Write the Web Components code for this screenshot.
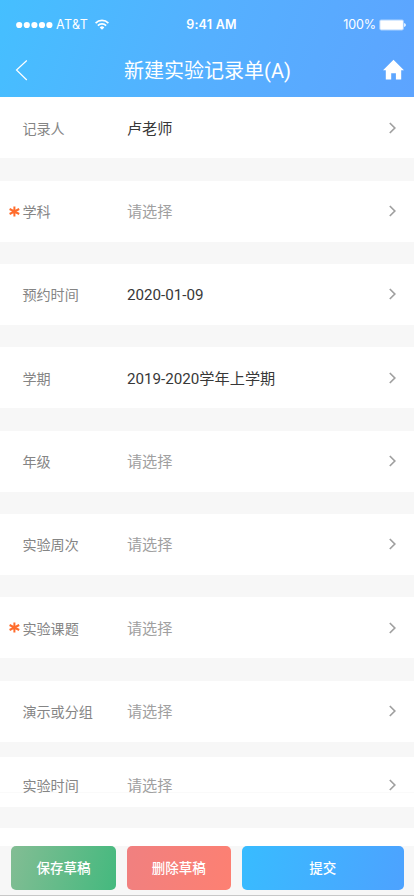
<!DOCTYPE html>
<html lang="zh-CN">
<head>
<meta charset="UTF-8">
<meta name="viewport" content="width=device-width, initial-scale=1.0">
<title>新建实验记录单(A)</title>
<style>
    body {
        margin: 0;
        background: #f7f7f7;
        font-family: Roboto, "Noto Sans CJK SC", sans-serif;
        overflow: hidden;
    }
</style>
</head>
<body>
<record-page>
    <status-bar slot="header" carrier="AT&amp;T" time="9:41 AM" battery="100%"></status-bar>
    <nav-bar slot="header">新建实验记录单(A)</nav-bar>

    <form-row label="记录人" filled>卢老师</form-row>
    <form-row label="学科" required>请选择</form-row>
    <form-row label="预约时间" filled>2020-01-09</form-row>
    <form-row label="学期" filled>2019-2020学年上学期</form-row>
    <form-row label="年级">请选择</form-row>
    <form-row label="实验周次">请选择</form-row>
    <form-row label="实验课题" required>请选择</form-row>
    <form-row label="演示或分组" tight>请选择</form-row>
    <form-row label="实验时间" short>请选择</form-row>

    <action-button slot="footer" kind="save">保存草稿</action-button>
    <action-button slot="footer" kind="delete">删除草稿</action-button>
    <action-button slot="footer" kind="submit">提交</action-button>
</record-page>

<script>
class RecordPage extends HTMLElement {
    connectedCallback() {
        this.attachShadow({ mode: 'open' });
        this.shadowRoot.innerHTML = `
            <style>
                :host {
                    display: flex;
                    flex-direction: column;
                    height: 896px;
                    box-sizing: border-box;
                    border-bottom: 1px solid #c8c8c8;
                }

                header {
                    flex: none;
                    height: 97.2px;
                    background: linear-gradient(110deg, #45bfff 0%, #55b0ff 50%, #5da4ff 100%);
                    color: white;
                }

                main {
                    flex: 1;
                    min-height: 0;
                    overflow: hidden;
                }

                .next-row {
                    height: 61px;
                    background: white;
                }

                footer {
                    flex: none;
                    display: grid;
                    grid-template-columns: 104.5px 104px 162px;
                    gap: 11px;
                    height: 49.5px;
                    box-sizing: border-box;
                    padding: 0 11.3px 5px;
                    background: #f7f7f7;
                }
            </style>
            <header><slot name="header"></slot></header>
            <main>
                <slot></slot>
                <div class="next-row"></div>
            </main>
            <footer><slot name="footer"></slot></footer>
        `;
    }
}

class StatusBar extends HTMLElement {
    connectedCallback() {
        this.attachShadow({ mode: 'open' });
        this.shadowRoot.innerHTML = `
            <style>
                :host {
                    display: grid;
                    grid-template-columns: 1fr auto 1fr;
                    align-items: center;
                    height: 49px;
                    padding: 0 8px 0 16px;
                    font-family: Inter, sans-serif;
                    font-size: 12.5px;
                }

                .left, .right {
                    display: flex;
                    align-items: center;
                }

                .right {
                    justify-content: flex-end;
                    gap: 3px;
                }

                .carrier {
                    margin: 0 7px 0 3px;
                    letter-spacing: 0.4px;
                }

                .time {
                    margin-left: 1px;
                    font-weight: 600;
                    letter-spacing: 0.25px;
                }

                .battery {
                    letter-spacing: -0.1px;
                }

                svg {
                    display: block;
                }
            </style>
            <div class="left">
                <svg width="37" height="8" fill="white">
                    <circle cx="3.2" cy="4" r="3.1"/>
                    <circle cx="10.8" cy="4" r="3.1"/>
                    <circle cx="18.4" cy="4" r="3.1"/>
                    <circle cx="26" cy="4" r="3.1"/>
                    <circle cx="33.4" cy="4" r="3.1"/>
                </svg>
                <span class="carrier"></span>
                <svg width="14" height="11" viewBox="0 0 14 11" fill="none" stroke="white" stroke-width="1.8">
                    <path d="M.6 4.1a9 9 0 0 1 12.8 0M2.9 6.6a5.8 5.8 0 0 1 8.2 0"/>
                    <path d="M4.7 8.4a3.3 3.3 0 0 1 4.6 0L7 10.7z" fill="white" stroke="none"/>
                </svg>
            </div>
            <span class="time"></span>
            <div class="right">
                <span class="battery"></span>
                <svg width="27" height="12" viewBox="0 0 27 12">
                    <rect x=".3" y=".6" width="24.6" height="10.8" rx="1.8" fill="white" fill-opacity=".5"/>
                    <rect x="1.3" y="1.6" width="22.6" height="8.8" rx=".8" fill="white"/>
                    <path d="M25.2 4.1q1.6.5 1.6 1.9t-1.6 1.9z" fill="white"/>
                </svg>
            </div>
        `;
        this.shadowRoot.querySelector('.carrier').textContent = this.getAttribute('carrier');
        this.shadowRoot.querySelector('.time').textContent = this.getAttribute('time');
        this.shadowRoot.querySelector('.battery').textContent = this.getAttribute('battery');
    }
}

class NavBar extends HTMLElement {
    connectedCallback() {
        this.attachShadow({ mode: 'open' });
        this.shadowRoot.innerHTML = `
            <style>
                :host {
                    display: grid;
                    grid-template-columns: 30px 1fr 30px;
                    align-items: center;
                    height: 42px;
                    padding: 0 8px 0 9px;
                }

                .title {
                    padding-top: 2px;
                    text-align: center;
                    font-size: 20px;
                    line-height: 40px;
                    white-space: nowrap;
                }

                svg {
                    display: block;
                }

                .back {
                    margin-left: -1px;
                }
            </style>
            <svg class="back" width="24" height="22" fill="none" stroke="white" stroke-width="1.2">
                <path d="M18.8 1.5L8.5 11l10.3 10"/>
            </svg>
            <span class="title"><slot></slot></span>
            <svg width="30" height="22" fill="white">
                <path d="M17.5.8L28 11.2h-2.8V20.5h-5.3v-6.2h-4.7v6.2H9.8V11.2H7z"/>
            </svg>
        `;
    }
}

class FormRow extends HTMLElement {
    connectedCallback() {
        this.attachShadow({ mode: 'open' });
        this.shadowRoot.innerHTML = `
            <style>
                :host {
                    display: grid;
                    grid-template-columns: 13.8px 104.5px 1fr 9px;
                    align-items: center;
                    height: 61px;
                    box-sizing: border-box;
                    margin-bottom: 22.35px;
                    padding: 0 16px 0 8.6px;
                    background: white;
                    color: #a0a0a0;
                }

                :host([filled]) {
                    color: #383838;
                }

                :host([tight]) {
                    margin-bottom: 15px;
                }

                /* last row in view, with its lower divider */
                :host([short]) {
                    height: 50.6px;
                    margin-bottom: 21px;
                    padding-top: 6px;
                    background: linear-gradient(#fafafa, #fafafa) 0 35.5px / 100% 1px no-repeat white;
                }

                .mark {
                    visibility: hidden;
                }

                :host([required]) .mark {
                    visibility: visible;
                }

                .label, .value {
                    padding-top: 2px;
                    line-height: 22px;
                }

                .label {
                    font-size: 14.1px;
                    color: #858585;
                }

                .value {
                    font-size: 15.2px;
                    white-space: nowrap;
                }

                svg {
                    display: block;
                }
            </style>
            <svg class="mark" width="11" height="11" stroke="#ff6c2c" stroke-width="2">
                <path d="M5.4.5v10M.6 3l9.6 5M.6 8l9.6-5"/>
            </svg>
            <span class="label"></span>
            <span class="value"><slot></slot></span>
            <svg width="9" height="12" fill="none" stroke="#a0a0a0" stroke-width="1.7">
                <path d="M.8 1l5 5-5 5"/>
            </svg>
        `;
        this.shadowRoot.querySelector('.label').textContent = this.getAttribute('label');
    }
}

class ActionButton extends HTMLElement {
    connectedCallback() {
        this.attachShadow({ mode: 'open' });
        this.shadowRoot.innerHTML = `
            <style>
                :host {
                    display: block;
                }

                button {
                    display: block;
                    width: 100%;
                    height: 100%;
                    padding: 0 0 1px;
                    border: 0;
                    border-radius: 5px;
                    color: white;
                    font: 500 13.5px Roboto, "Noto Sans CJK SC", sans-serif;
                }

                :host([kind="save"]) button {
                    background: linear-gradient(105deg, #83bd94, #44b97e);
                }

                :host([kind="delete"]) button {
                    background: linear-gradient(105deg, #f08080, #fd8072);
                }

                :host([kind="submit"]) button {
                    background: linear-gradient(105deg, #38bcff, #4da2ff);
                }
            </style>
            <button type="button"><slot></slot></button>
        `;
    }
}

customElements.define('record-page', RecordPage);
customElements.define('status-bar', StatusBar);
customElements.define('nav-bar', NavBar);
customElements.define('form-row', FormRow);
customElements.define('action-button', ActionButton);
</script>
</body>
</html>
